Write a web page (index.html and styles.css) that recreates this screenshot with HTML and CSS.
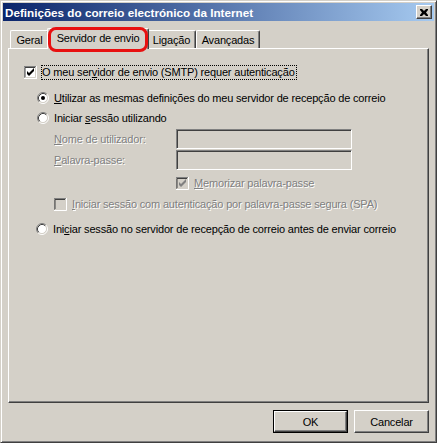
FILE: index.html
```html
<!DOCTYPE html>
<html lang="pt">
<head>
<meta charset="utf-8">
<title>Definições do correio electrónico da Internet</title>
<link rel="stylesheet" href="styles.css">
</head>
<body>
<div class="window">
  <div class="titlebar">
    <span class="title">Definições do correio electrónico da Internet</span>
    <span class="close">
      <svg width="8" height="7" viewBox="0 0 8 7"><path d="M0 0h2l2 2 2-2h2v1L6 3.5 8 6v1H6L4 5 2 7H0V6l2-2.5L0 1z" fill="#000"/></svg>
    </span>
  </div>

  <div class="tabs">
    <div class="tab t-geral">Geral</div>
    <div class="tab active t-serv">Servidor de envio<span class="highlight"></span></div>
    <div class="tab t-lig">Ligação</div>
    <div class="tab t-av">Avançadas</div>
  </div>

  <div class="panel">
    <div class="row r-main">
      <svg class="cb" width="13" height="13" viewBox="0 0 13 13">
        <rect x="0" y="0" width="13" height="13" fill="#fff"/>
        <path d="M0 12.5V0.5H12.5" stroke="#808080" fill="none"/>
        <path d="M1 11.5V1.5H11.5" stroke="#404040" fill="none"/>
        <path d="M0 12.5H12.5V0" stroke="#fff" fill="none"/>
        <path d="M1 11.5H11.5V1" stroke="#d4d0c8" fill="none"/>
        <path d="M3 5v3l2 2 5-5V2L5 7z" fill="#000"/>
      </svg>
      <span class="focus">O meu ser<u>v</u>idor de envio (SMTP) requer autenticação</span>
    </div>

    <div class="row radio r1">
      <svg class="rb" width="12" height="12" viewBox="0 0 12 12">
        <circle cx="6" cy="6" r="4.5" fill="#fff"/>
        <path d="M2.11 9.89A5.5 5.5 0 0 1 9.89 2.11" stroke="#808080" fill="none"/>
        <path d="M9.89 2.11A5.5 5.5 0 0 1 2.11 9.89" stroke="#fff" fill="none"/>
        <path d="M2.82 9.18A4.5 4.5 0 0 1 9.18 2.82" stroke="#404040" fill="none"/>
        <path d="M9.18 2.82A4.5 4.5 0 0 1 2.82 9.18" stroke="#d4d0c8" fill="none"/>
        <circle cx="6" cy="6" r="2" fill="#000"/>
      </svg>
      <span class="lbl"><u>U</u>tilizar as mesmas definições do meu servidor de recepção de correio</span>
    </div>

    <div class="row radio r2">
      <svg class="rb" width="12" height="12" viewBox="0 0 12 12">
        <circle cx="6" cy="6" r="4.5" fill="#fff"/>
        <path d="M2.11 9.89A5.5 5.5 0 0 1 9.89 2.11" stroke="#808080" fill="none"/>
        <path d="M9.89 2.11A5.5 5.5 0 0 1 2.11 9.89" stroke="#fff" fill="none"/>
        <path d="M2.82 9.18A4.5 4.5 0 0 1 9.18 2.82" stroke="#404040" fill="none"/>
        <path d="M9.18 2.82A4.5 4.5 0 0 1 2.82 9.18" stroke="#d4d0c8" fill="none"/>
      </svg>
      <span class="lbl">Iniciar <u>s</u>essão utilizando</span>
    </div>

    <div class="field f1">
      <span class="flabel disabled"><u>N</u>ome de utilizador:</span>
      <span class="input"></span>
    </div>
    <div class="field f2">
      <span class="flabel disabled"><u>P</u>alavra-passe:</span>
      <span class="input"></span>
    </div>

    <div class="row remember">
      <svg class="cb" width="13" height="13" viewBox="0 0 13 13">
        <rect x="0" y="0" width="13" height="13" fill="#d4d0c8"/>
        <path d="M0 12.5V0.5H12.5" stroke="#808080" fill="none"/>
        <path d="M1 11.5V1.5H11.5" stroke="#404040" fill="none"/>
        <path d="M0 12.5H12.5V0" stroke="#fff" fill="none"/>
        <path d="M1 11.5H11.5V1" stroke="#d4d0c8" fill="none"/>
        <path d="M3 5v3l2 2 5-5V2L5 7z" fill="#808080"/>
      </svg>
      <span class="lbl disabled"><u>M</u>emorizar palavra-passe</span>
    </div>

    <div class="row spa">
      <svg class="cb" width="13" height="13" viewBox="0 0 13 13">
        <rect x="0" y="0" width="13" height="13" fill="#d4d0c8"/>
        <path d="M0 12.5V0.5H12.5" stroke="#808080" fill="none"/>
        <path d="M1 11.5V1.5H11.5" stroke="#404040" fill="none"/>
        <path d="M0 12.5H12.5V0" stroke="#fff" fill="none"/>
        <path d="M1 11.5H11.5V1" stroke="#d4d0c8" fill="none"/>
      </svg>
      <span class="lbl disabled"><u>I</u>niciar sessão com autenticação por palavra-passe segura (SPA)</span>
    </div>

    <div class="row radio r3">
      <svg class="rb" width="12" height="12" viewBox="0 0 12 12">
        <circle cx="6" cy="6" r="4.5" fill="#fff"/>
        <path d="M2.11 9.89A5.5 5.5 0 0 1 9.89 2.11" stroke="#808080" fill="none"/>
        <path d="M9.89 2.11A5.5 5.5 0 0 1 2.11 9.89" stroke="#fff" fill="none"/>
        <path d="M2.82 9.18A4.5 4.5 0 0 1 9.18 2.82" stroke="#404040" fill="none"/>
        <path d="M9.18 2.82A4.5 4.5 0 0 1 2.82 9.18" stroke="#d4d0c8" fill="none"/>
      </svg>
      <span class="lbl">Ini<u>c</u>iar sessão no servidor de recepção de correio antes de enviar correio</span>
    </div>
  </div>

  <div class="buttons">
    <span class="btn default"><span class="btn-inner">OK</span></span>
    <span class="btn"><span class="btn-inner">Cancelar</span></span>
  </div>
</div>
</body>
</html>
```

FILE: styles.css
```css
html, body {
  margin: 0;
  padding: 0;
  background: #d4d0c8;
}
body {
  width: 437px;
  height: 443px;
  overflow: hidden;
  font-family: "Liberation Sans", Arial, sans-serif;
  font-size: 11px;
  letter-spacing: -0.17px;
  color: #000;
}
.window {
  box-sizing: border-box;
  width: 437px;
  height: 443px;
  padding: 1px;
  border-left: 1px solid #d4d0c8;
  border-top: 1px solid #d4d0c8;
  border-right: 1px solid #404040;
  border-bottom: 1px solid #404040;
  box-shadow: inset 1px 1px 0 #fff, inset -1px -1px 0 #808080;
  display: flex;
  flex-direction: column;
  background: #d4d0c8;
}
.titlebar {
  margin: 1px 1px 0 1px;
  height: 18px;
  background: linear-gradient(to right, #0a246a, #a6caf0);
  display: flex;
  align-items: center;
  justify-content: space-between;
  padding: 0 2px 0 2px;
}
.title {
  color: #fff;
  font-weight: bold;
  font-size: 11.7px;
  letter-spacing: 0;
}
.close {
  box-sizing: border-box;
  width: 16px;
  height: 14px;
  background: #d4d0c8;
  border-left: 1px solid #fff;
  border-top: 1px solid #fff;
  border-right: 1px solid #404040;
  border-bottom: 1px solid #404040;
  box-shadow: inset -1px -1px 0 #808080;
  display: flex;
  align-items: center;
  justify-content: center;
  padding-right: 1px;
}
.close svg { display: block; }

.tabs {
  display: flex;
  align-items: flex-end;
  margin: 7px 0 0 8px;
  height: 20px;
  position: relative;
  z-index: 2;
}
.tab {
  box-sizing: border-box;
  height: 18px;
  border-left: 1px solid #fff;
  border-top: 1px solid #fff;
  border-right: 1px solid #404040;
  box-shadow: inset -1px 0 0 #808080;
  border-top-left-radius: 2px;
  border-top-right-radius: 2px;
  background: #d4d0c8;
  display: flex;
  align-items: center;
  justify-content: center;
  padding-top: 1px;
  white-space: nowrap;
}
.t-geral { width: 39px; }
.t-serv { width: 102px; margin: 0 -2px; }
.t-lig { width: 49px; }
.t-av { width: 64px; }
.tab.active {
  height: 21px;
  margin-bottom: -1px;
  padding-top: 0;
  padding-bottom: 3px;
  position: relative;
  z-index: 3;
}
.highlight {
  position: absolute;
  left: 0;
  right: 0;
  top: -2px;
  bottom: -3px;
  border: 3px solid #e81010;
  border-radius: 8px;
}

.panel {
  flex: 1;
  margin: 0 6px 0 6px;
  border-left: 1px solid #fff;
  border-top: 1px solid #fff;
  border-right: 1px solid #404040;
  border-bottom: 1px solid #404040;
  box-shadow: inset -1px -1px 0 #808080;
  display: flex;
  flex-direction: column;
  padding: 15px 0 0 15px;
}
.row {
  display: flex;
  align-items: center;
  height: 16px;
  white-space: nowrap;
}
.cb, .rb { display: block; flex: none; }
.focus {
  margin-left: 4px;
  border: 1px dotted #000;
  padding: 0 1px 0 0;
  line-height: 13px;
}
.lbl { margin-left: 5px; }
.radio { margin-left: 13px; }
.r1 { margin-top: 10px; }
.r2 { margin-top: 4px; }
.field {
  display: flex;
  align-items: center;
  height: 20px;
  margin-left: 30px;
}
.f1 { margin-top: 3px; }
.f2 { margin-top: 1px; }
.flabel { width: 122px; }
.input {
  box-sizing: border-box;
  width: 176px;
  height: 20px;
  border-left: 1px solid #808080;
  border-top: 1px solid #808080;
  border-right: 1px solid #fff;
  border-bottom: 1px solid #fff;
  box-shadow: inset 1px 1px 0 #404040, inset -1px -1px 0 #d4d0c8;
  background: #d4d0c8;
}
.remember { margin: 5px 0 0 152px; }
.spa { margin: 5px 0 0 30px; }
.r3 { margin-top: 9px; margin-left: 12px; }
.disabled {
  color: #808080;
  text-shadow: 1px 1px 0 #fff;
}

.buttons {
  display: flex;
  justify-content: flex-end;
  gap: 6px;
  margin: 7px 6px 8px 0;
}
.btn {
  box-sizing: border-box;
  width: 75px;
  height: 23px;
  display: flex;
  background: #d4d0c8;
}
.btn-inner {
  flex: 1;
  display: flex;
  align-items: center;
  justify-content: center;
  border-left: 1px solid #fff;
  border-top: 1px solid #fff;
  border-right: 1px solid #404040;
  border-bottom: 1px solid #404040;
  box-shadow: inset -1px -1px 0 #808080;
}
.btn.default {
  border: 1px solid #000;
}
```
